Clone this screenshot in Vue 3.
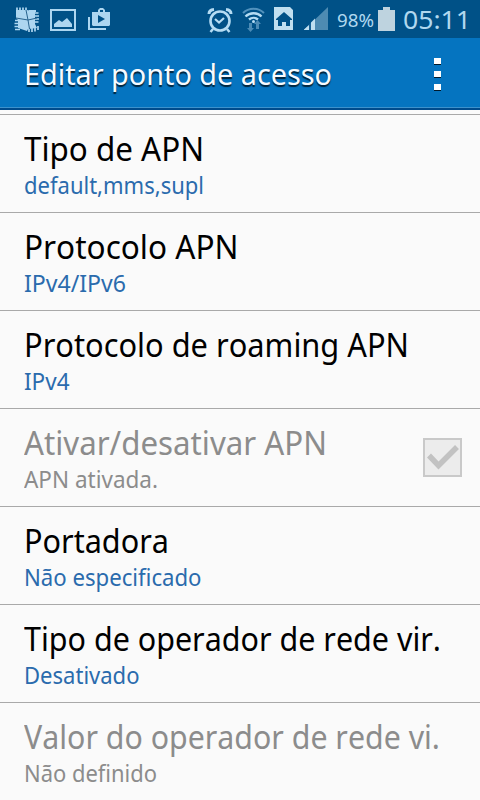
<script setup>
const rows = [
  { title: 'Tipo de APN', titleWidth: 180, value: 'default,mms,supl', valueWidth: 180 },
  { title: 'Protocolo APN', titleWidth: 214.5, value: 'IPv4/IPv6', valueWidth: 102 },
  { title: 'Protocolo de roaming APN', titleWidth: 385, value: 'IPv4', valueWidth: 45.5 },
  { title: 'Ativar/desativar APN', titleWidth: 303, value: 'APN ativada.', valueWidth: 134, disabled: true, checkbox: true },
  { title: 'Portadora', titleWidth: 145, value: 'Não especificado', valueWidth: 177.5 },
  { title: 'Tipo de operador de rede vir.', titleWidth: 417, value: 'Desativado', valueWidth: 115.5 },
  { title: 'Valor do operador de rede vi.', titleWidth: 416, value: 'Não definido', valueWidth: 133, disabled: true },
]

// Condenses or widens a label horizontally so it takes the given width.
const vFit = {
  mounted(el, { value }) {
    el.style.transform = `scaleX(${value / el.getBoundingClientRect().width})`
  },
}
</script>

<template>
  <div class="screen">
    <header class="status">
      <svg class="status-icons" width="330" height="38" viewBox="0 0 330 38" fill="#add6f0">
        <g>
          <path d="M16 10H27L35 11.500V24L37 28L28 29L27 31L18 28V20L16 18Z" />
          <path d="M17 7.500V12M20 7.500V12M23 7.500V12M26 7.500V12M34 13H38.500M34 16H39M34 19H39M34 22H38.500M20 20.500H15M20 23.500H14.500M20 26.500H14.500M20 29.500H15M29 28V32M32 28V32M35 27V31.500M38 26V30" fill="none" stroke="#add6f0" stroke-width="1.7" />
          <path d="M29 11H36" stroke="#add6f0" stroke-width="2" />
          <path d="M26 10L28 20L29.500 29M16 18L28 20L37 18" fill="none" stroke="#28638e" stroke-width="1" />
        </g>
        <path fill-rule="evenodd" d="M50 9H76V31H50ZM52 11V29H74V11Z" />
        <path d="M54 27V24L59 20L62 22L67 18L72 24V27Z" />
        <path d="M88 17H90V28H106V30H88Z" />
        <path fill-rule="evenodd" d="M92 12H98V10L100 8H103L105 10V12H110V25L109 26H93L92 25ZM100 12H103V10H100ZM98 15V23L105 19Z" />
        <g fill="none" stroke="#b5dcf3">
          <circle cx="220" cy="21" r="9.500" stroke-width="2.600" />
          <path d="M215 19L219 22.500L224 18" stroke-width="2.200" />
          <path d="M209 14Q209 10 214 9.500M226 9.500Q231 10 231 14" stroke-width="3" />
          <path d="M213 29L210.500 32M227 29L229.500 32" stroke-width="2.500" />
        </g>
        <g fill="none">
          <path d="M243 13A15 15 0 0 1 264 13" stroke="#5292bd" stroke-width="2" />
          <path d="M245.500 16.500A11.500 11.500 0 0 1 261.500 16.500M249 19.500A7 7 0 0 1 258 19.500" stroke="#b5dcf3" stroke-width="2.400" />
        </g>
        <circle cx="253.500" cy="21.500" r="1.500" fill="#b5dcf3" />
        <path d="M249 23H252V28H254L250.500 32L247 28H249ZM256 29V24H254L257.500 20L261 24H259V29Z" fill="#4c8bb5" />
        <path fill-rule="evenodd" d="M274 7H290L293 10V30H274ZM284 12L276 19V20H278V26H282V22H286V26H290V20H292V19Z" fill="#c0dff0" />
        <path d="M304 30L328 7V30Z" fill="#4e8bb2" />
        <path d="M309 30V25L312 22V30Z" fill="#176195" />
        <path d="M304 30V29.500L309 25V30ZM311 30V22.500L315 18.500V30Z" fill="#c0dff0" />
      </svg>
      <div class="percent"><span v-fit="37">98%</span></div>
      <svg class="battery" width="17" height="25" viewBox="0 0 17 25" fill="#bed3df">
        <path d="M5 0H12V3H17V24H0V3H5Z" />
      </svg>
      <time class="clock"><span v-fit="68">05:11</span></time>
    </header>

    <div class="bar">
      <h1><span v-fit="308">Editar ponto de acesso</span></h1>
      <div class="more"><i></i><i></i><i></i></div>
    </div>

    <main>
      <section v-for="row in rows" :key="row.title" class="row" :class="{ disabled: row.disabled }">
        <div class="text">
          <div class="title"><span v-fit="row.titleWidth">{{ row.title }}</span></div>
          <div class="value"><span v-fit="row.valueWidth">{{ row.value }}</span></div>
        </div>
        <svg v-if="row.checkbox" class="check" width="39" height="39" viewBox="0 0 39 39">
          <rect x="1" y="1" width="37" height="37" fill="#ececec" stroke="#c9c9c9" stroke-width="2" />
          <path d="M6 17.500L15.500 27.500L34 9" fill="none" stroke="#c2c2c2" stroke-width="5.500" />
        </svg>
      </section>
    </main>
  </div>
</template>

<style>
body {
  margin: 0;
  overflow: hidden;
}
</style>

<style scoped>
.screen {
  width: 480px;
  height: 800px;
  overflow: hidden;
  background: #fafafa;
  font-family: "Noto Sans", sans-serif;
  font-kerning: none;
}
span {
  display: inline-block;
  white-space: nowrap;
  transform-origin: left center;
}
.status {
  display: flex;
  height: 38px;
  background: #005187;
  color: #b0d8ef;
}
.status-icons {
  flex: none;
}
.percent {
  width: 48px;
  box-sizing: border-box;
  padding-left: 7px;
  font-size: 18px;
  line-height: 40px;
}
.battery {
  flex: none;
  margin-top: 7px;
}
.clock {
  padding-left: 8px;
  font-size: 26px;
  line-height: 38px;
}
.bar {
  display: flex;
  box-sizing: border-box;
  height: 72px;
  background: #0574c0;
  border-bottom: 2px solid #004b8c;
  box-shadow: inset 0 -1px #3c91cc;
}
h1 {
  flex: 1;
  margin: 0;
  padding-left: 24px;
  color: #f7fbff;
  font-size: 29.5px;
  font-weight: 400;
  line-height: 72px;
  text-shadow: 0 1.5px 1px #00243c;
}
.more {
  display: flex;
  flex-direction: column;
  gap: 7px;
  padding: 20px 39px 0 0;
}
.more i {
  width: 7px;
  height: 6px;
  background: #fff;
  box-shadow: 0 1px #00192b;
}
main {
  padding-top: 4px;
}
.row {
  display: flex;
  box-sizing: border-box;
  height: 98px;
  padding: 14px 18px 0 24px;
  border-top: 1px solid #a9a9a9;
  color: #000;
}
.text {
  flex: 1;
  min-width: 0;
}
.title {
  height: 40px;
  font-size: 32px;
  line-height: 40px;
}
.value {
  height: 30px;
  margin-top: 1px;
  color: #2a6bad;
  font-size: 23.5px;
  line-height: 30px;
}
.disabled,
.disabled .value {
  color: #8c8c8c;
}
.check {
  flex: none;
  margin-top: 15px;
}
</style>
